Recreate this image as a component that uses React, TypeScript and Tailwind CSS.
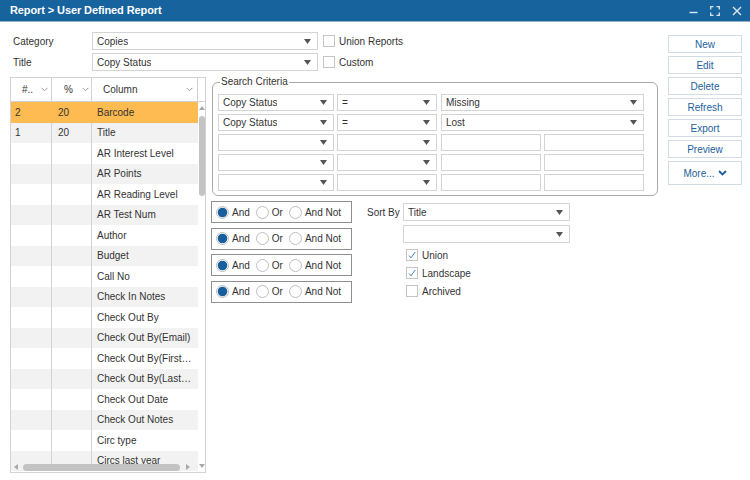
import React from "react";

const Arrow = () => (
  <svg width="7" height="5" viewBox="0 0 7 5" className="shrink-0">
    <path d="M0 0H7L3.5 5Z" fill="#555" />
  </svg>
);

const Chev = () => (
  <svg width="7" height="5" viewBox="0 0 7 5" className="shrink-0">
    <path d="M0.5 0.8L3.5 3.8L6.5 0.8" fill="none" stroke="#9a9a9a" strokeWidth="1" />
  </svg>
);

function Select({ value, className }: { value?: string; className: string }) {
  return (
    <div className={`flex items-center justify-between border border-[#d4d4d4] bg-white pl-[4px] pr-[6px] ${className}`}>
      <span className="truncate">{value}</span>
      <Arrow />
    </div>
  );
}

function Box({ className }: { className: string }) {
  return <div className={`border border-[#d4d4d4] bg-white ${className}`} />;
}

function Check({ checked }: { checked?: boolean }) {
  return (
    <div className="w-[12px] h-[12px] border border-[#c4c4c4] bg-white flex items-center justify-center shrink-0">
      {checked && (
        <svg width="10" height="10" viewBox="0 0 10 10">
          <path d="M2 5.5L4 7.8L8.2 2" fill="none" stroke="#3f7fc0" strokeWidth="1" />
        </svg>
      )}
    </div>
  );
}

function Radio({ label, on }: { label: string; on?: boolean }) {
  return (
    <div className="flex items-center gap-[3px]">
      <svg width="13" height="13" viewBox="0 0 13 13" className="shrink-0">
        <circle cx="6.5" cy="6.5" r="6" fill="#fff" stroke="#bdbdbd" strokeWidth="1" />
        {on && <circle cx="6.5" cy="6.5" r="4.8" fill="#17609b" />}
      </svg>
      <span>{label}</span>
    </div>
  );
}

function RadioGroup() {
  return (
    <div className="w-[141px] h-[22px] border border-[#8f8f8f] flex items-center pl-[4px] gap-[6px]">
      <Radio label="And" on />
      <Radio label="Or" />
      <Radio label="And Not" />
    </div>
  );
}

const rows: [string, string, string][] = [
  ["2", "20", "Barcode"],
  ["1", "20", "Title"],
  ["", "", "AR Interest Level"],
  ["", "", "AR Points"],
  ["", "", "AR Reading Level"],
  ["", "", "AR Test Num"],
  ["", "", "Author"],
  ["", "", "Budget"],
  ["", "", "Call No"],
  ["", "", "Check In Notes"],
  ["", "", "Check Out By"],
  ["", "", "Check Out By(Email)"],
  ["", "", "Check Out By(First…"],
  ["", "", "Check Out By(Last…"],
  ["", "", "Check Out Date"],
  ["", "", "Check Out Notes"],
  ["", "", "Circ type"],
  ["", "", "Circs last year"],
];

const buttons = ["New", "Edit", "Delete", "Refresh", "Export", "Preview"];

export default function App() {
  return (
    <div className="w-[750px] h-[480px] bg-white text-[10px] text-[#333] overflow-hidden font-['Liberation_Sans',Arial,sans-serif]">
      {/* Title bar */}
      <div className="h-[22px] bg-[#17639d] border-b border-[#8fb2d2] flex items-center justify-between pl-[10px] pr-[8px]">
        <span className="text-white font-bold text-[11px] tracking-[-0.1px]">Report &gt; User Defined Report</span>
        <div className="flex items-center gap-[12px]">
          <svg width="9" height="10" viewBox="0 0 9 10">
            <path d="M0.5 6.5H8.5" stroke="#dbe6f1" strokeWidth="1.4" />
          </svg>
          <svg width="10" height="10" viewBox="0 0 10 10">
            <path d="M0.7 3.5V0.7H3.5M6.5 0.7H9.3V3.5M9.3 6.5V9.3H6.5M3.5 9.3H0.7V6.5" fill="none" stroke="#dbe6f1" strokeWidth="1.3" />
          </svg>
          <svg width="10" height="10" viewBox="0 0 10 10">
            <path d="M1 1L9 9M9 1L1 9" stroke="#dbe6f1" strokeWidth="1.4" />
          </svg>
        </div>
      </div>

      <div className="flex">
        {/* Left column */}
        <div className="w-[659px] pl-[10px] pt-[10px]">
          <div className="flex items-center h-[18px]">
            <span className="w-[82px] pl-[3px]">Category</span>
            <Select value="Copies" className="w-[226px] h-[18px]" />
            <div className="ml-[5px]"><Check /></div>
            <span className="ml-[4px]">Union Reports</span>
          </div>
          <div className="flex items-center h-[18px] mt-[3px]">
            <span className="w-[82px] pl-[3px]">Title</span>
            <Select value="Copy Status" className="w-[226px] h-[18px]" />
            <div className="ml-[5px]"><Check /></div>
            <span className="ml-[4px]">Custom</span>
          </div>

          <div className="flex mt-[4px]">
            {/* Grid */}
            <div className="mt-[2px] w-[196px] h-[396px] border border-[#d2d2d2] flex flex-col">
              <div className="h-[24px] flex border-b border-[#d2d2d2] shrink-0">
                <div className="w-[41px] border-r border-[#d2d2d2] flex items-center pl-[11px]">
                  <span>#..</span>
                  <span className="ml-[8px]"><Chev /></span>
                </div>
                <div className="w-[40px] border-r border-[#d2d2d2] flex items-center pl-[12px]">
                  <span>%</span>
                  <span className="ml-[9px]"><Chev /></span>
                </div>
                <div className="w-[106px] border-r border-[#d2d2d2] flex items-center justify-between pl-[11px] pr-[4px]">
                  <span>Column</span>
                  <Chev />
                </div>
                <div className="flex-1" />
              </div>
              <div className="relative flex-1 overflow-hidden flex">
                <div className="w-[187px]">
                  {rows.map((r, i) => (
                    <div
                      key={i}
                      className={`h-[20.5px] flex ${i === 0 ? "bg-[#fdbb52]" : i % 2 === 1 ? "bg-[#f2f2f2]" : "bg-white"}`}
                    >
                      <div className={`w-[41px] border-r ${i === 0 ? "border-[#fdbb52]" : "border-[#d2d2d2]"} flex items-center pl-[4px]`}>{r[0]}</div>
                      <div className={`w-[40px] border-r ${i === 0 ? "border-[#fdbb52]" : "border-[#d2d2d2]"} flex items-center pl-[6px]`}>{r[1]}</div>
                      <div className="w-[106px] flex items-center pl-[5px] pr-[2px] min-w-0 whitespace-nowrap">
                        <span>{r[2]}</span>
                      </div>
                    </div>
                  ))}
                </div>
                <div className="w-[7px] flex flex-col items-center">
                  <svg width="6" height="4" viewBox="0 0 6 4" className="mt-[4px]">
                    <path d="M0 4L3 0L6 4Z" fill="#a8a8a8" />
                  </svg>
                  <div className="mt-[6px] w-[6px] h-[80px] rounded-full bg-[#c3c3c3]" />
                </div>
                {/* horizontal scrollbar overlay */}
                <div className="absolute left-0 right-0 bottom-[1px] h-[8px] flex items-center">
                  <svg width="4" height="6" viewBox="0 0 4 6" className="ml-[3px]">
                    <path d="M4 0L0 3L4 6Z" fill="#a8a8a8" />
                  </svg>
                  <div className="ml-[5px] w-[160px] h-[7px] rounded-full bg-[#c3c3c3]" />
                  <svg width="4" height="6" viewBox="0 0 4 6" className="ml-[6px]">
                    <path d="M0 0L4 3L0 6Z" fill="#a8a8a8" />
                  </svg>
                  <svg width="6" height="4" viewBox="0 0 6 4" className="ml-[9px] mt-[-3px]">
                    <path d="M0 0L6 0L3 4Z" fill="#a8a8a8" />
                  </svg>
                </div>
              </div>
            </div>

            {/* Right area */}
            <div className="ml-[6px] w-[447px]">
              <fieldset className="border border-[#a9a9a9] rounded-[6px] pl-[5px] pt-[5px] pb-[4px] w-[446px]">
                <legend className="ml-[2px] px-[1px] leading-[14px]">Search Criteria</legend>
                <div className="flex flex-col gap-[3px]">
                  <div className="flex h-[17px]">
                    <Select value="Copy Status" className="w-[116px] h-[17px]" />
                    <Select value="=" className="ml-[3px] w-[100px] h-[17px]" />
                    <Select value="Missing" className="ml-[4px] w-[203px] h-[17px]" />
                  </div>
                  <div className="flex h-[17px]">
                    <Select value="Copy Status" className="w-[116px] h-[17px]" />
                    <Select value="=" className="ml-[3px] w-[100px] h-[17px]" />
                    <Select value="Lost" className="ml-[4px] w-[203px] h-[17px]" />
                  </div>
                  {[0, 1, 2].map((k) => (
                    <div key={k} className="flex h-[17px]">
                      <Select className="w-[116px] h-[17px]" />
                      <Select className="ml-[3px] w-[100px] h-[17px]" />
                      <Box className="ml-[4px] w-[100px] h-[17px]" />
                      <Box className="ml-[3px] w-[100px] h-[17px]" />
                    </div>
                  ))}
                </div>
              </fieldset>

              <div className="flex mt-[5px]">
                <div className="flex flex-col gap-[4.5px] ml-[-1px]">
                  <RadioGroup />
                  <RadioGroup />
                  <RadioGroup />
                  <RadioGroup />
                </div>
                <div className="ml-[15px] flex flex-col">
                  <div className="flex items-center mt-[2px]">
                    <span className="w-[36px]">Sort By</span>
                    <Select value="Title" className="w-[167px] h-[18px]" />
                  </div>
                  <div className="pl-[36px] mt-[4px]">
                    <Select className="w-[167px] h-[18px]" />
                  </div>
                  <div className="pl-[39px] mt-[6px] flex flex-col gap-[6px]">
                    <div className="flex items-center gap-[4px] h-[12px]">
                      <Check checked />
                      <span>Union</span>
                    </div>
                    <div className="flex items-center gap-[4px] h-[12px]">
                      <Check checked />
                      <span>Landscape</span>
                    </div>
                    <div className="flex items-center gap-[4px] h-[12px]">
                      <Check />
                      <span>Archived</span>
                    </div>
                  </div>
                </div>
              </div>
            </div>
          </div>
        </div>

        {/* Right buttons */}
        <div className="ml-[9px] pt-[13px] flex flex-col gap-[3px]">
          {buttons.map((b) => (
            <div key={b} className="w-[74px] h-[18px] border border-[#d3dbe4] bg-white flex items-center justify-center text-[#1c5f9c]">
              {b}
            </div>
          ))}
          <div className="w-[74px] h-[24px] border border-[#d3dbe4] bg-white flex items-center justify-center gap-[3px] text-[#1c5f9c]">
            <span>More...</span>
            <svg width="9" height="6" viewBox="0 0 9 6">
              <path d="M1 1L4.5 4.5L8 1" fill="none" stroke="#1c5f9c" strokeWidth="1.8" />
            </svg>
          </div>
        </div>
      </div>
    </div>
  );
}
